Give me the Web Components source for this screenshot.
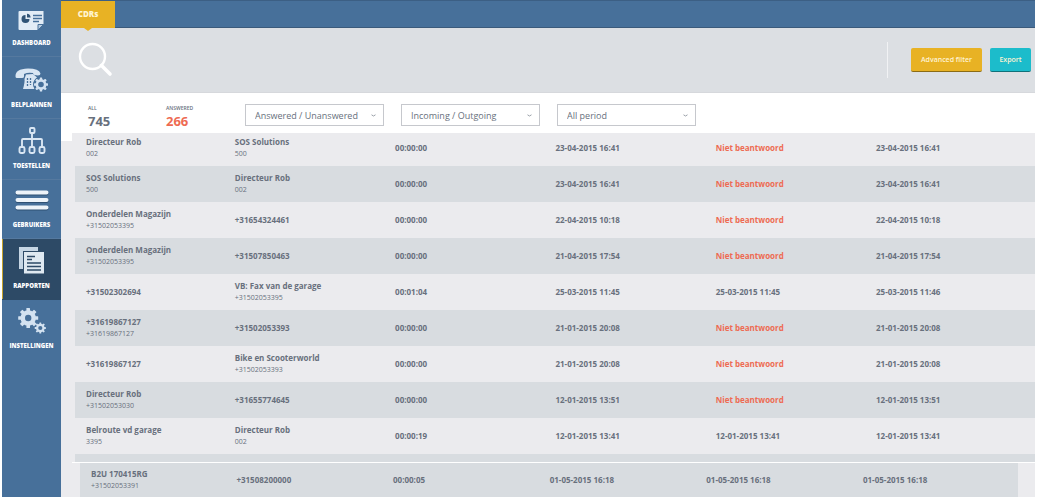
<!DOCTYPE html>
<html lang="nl">
<head>
<meta charset="utf-8">
<meta name="viewport" content="width=device-width, initial-scale=1">
<title>CDRs</title>
<style>
  body {
    margin: 0;
    background: #fff;
    color: #68707d;
    font-family: "Open Sans", "Noto Sans", sans-serif;
    --blue: #47709a;
    --navy: #2d4a66;
    --amber: #e8b224;
    --teal: #1cbccb;
    --red: #ee6b52;
    --light: #ebebee;
    --stripe: #d8dce0;
  }
</style>
</head>
<body>
<cdr-app></cdr-app>

<script>
const define = (name, html, setup) => customElements.define(name, class extends HTMLElement {
  connectedCallback() {
    if (this.shadowRoot) return;
    const root = this.attachShadow({ mode: "open" });
    const template = document.createElement("template");
    template.innerHTML = html;
    root.append(template.content.cloneNode(true));
    if (setup) setup(this, root);
  }
});

const gear = (cx, cy, r, teeth, tooth, hole) => {
  const body = r * 0.77, ring = (body + hole) / 2;
  let out = "";
  for (let i = 0; i < teeth; i++) {
    out += `<rect x="${cx - tooth / 2}" y="${cy - r}" width="${tooth}" height="${r - ring}" rx=".5" transform="rotate(${i * 360 / teeth} ${cx} ${cy})"/>`;
  }
  return `<g fill="#d3e2f1">${out}<circle cx="${cx}" cy="${cy}" r="${ring}" fill="none" stroke="#d3e2f1" stroke-width="${body - hole}"/></g>`;
};

const icons = {
  dashboard: [28, 21, `
    <path d="M1.500 1H25.500V14L19.500 20H1.500Q.500 20 .500 19V2Q.500 1 1.500 1Z" fill="#e2ecf6"/>
    <path d="M20 20V14.500H25.500Z" fill="#b5cbe0" stroke="#47709a" stroke-width="1"/>
    <path d="M7.500 5A4 4 0 1 0 11.500 9H7.500Z" fill="#315476"/>
    <path d="M9 3.800A4 4 0 0 1 12.600 7.500H9Z" fill="#315476"/>
    <path d="M15 5.500H24M15 8.500H24M15 11.500H21" stroke="#47709a" stroke-width="1.500"/>`],
  phone: [34, 28, `
    <path d="M.500 11.500Q0 4 13 3.500Q24 3.500 25.500 8.500Q25.500 10.500 23 10.500L19.500 10Q18 9.500 18 8Q13 7 9 9V11.500Q9 13 7 13H2Q.500 13 .500 11.500Z" fill="#d9e6f3"/>
    <path d="M11 9.500L18 9L22 12.500Q17.500 16 18.500 21L19.500 24H8Q10 17 9.500 14Z" fill="#d9e6f3"/>
    <path d="M12.500 13V21M15.500 13V20" stroke="#47709a" stroke-width="1.300" stroke-dasharray="2 1"/>
    <circle cx="26" cy="19.500" r="7.800" fill="#47709a"/>${gear(26, 19.5, 7, 8, 2.4, 2.8)}`],
  tree: [28, 27, `
    <g fill="none" stroke="#d9e6f3" stroke-width="1.900">
      <rect x="12" y="1" width="4.500" height="5" rx="1"/>
      <path d="M14 6V20M4 20V13Q4 12 5 12H23Q24 12 24 13V20"/>
      <rect x="1.500" y="20" width="5" height="6" rx="1.500"/>
      <rect x="11.500" y="20" width="5" height="6" rx="1.500"/>
      <rect x="21.500" y="20" width="5" height="6" rx="1.500"/>
    </g>`],
  bars: [34, 25, `
    <path d="M2.500 5.500H31.500M2.500 13H31.500M2.500 20.500H31.500" stroke="#2f5073" stroke-width="4" stroke-linecap="round"/>
    <path d="M2.500 4.500H31.500M2.500 12H31.500M2.500 19.500H31.500" stroke="#edf3f9" stroke-width="4" stroke-linecap="round"/>`],
  report: [28, 27, `
    <path d="M1 0H20V4H5V22H1Z" fill="#c6d6e4"/>
    <path d="M6 5H26V26.500H6Z" fill="#dfe9f1"/>
    <path d="M9 9.500H17M9 12.500H14M9 16H23M9 19.500H23M9 23H23" stroke="#2d4a66" stroke-width="1.400"/>`],
  gears: [28, 26, gear(10.2, 10, 10, 8, 3.6, 3.2) + gear(22.3, 20, 5.6, 8, 1.9, 2.1)]
};

define("nav-item", `
  <style>
    :host { display: block; border-bottom: 1px solid #55799f; box-sizing: border-box; }
    :host([active]) { background: var(--navy); box-shadow: inset 1px 0 #c6a32c; border-color: var(--navy); }
    :host([last]) { border: 0; }
    a { display: flex; flex-direction: column; align-items: center; gap: 8px; padding: 8px 0 9px;
        color: #fff; text-decoration: none; }
    svg { display: block; }
    span { font-size: 6px; line-height: 8px; font-weight: 800; white-space: nowrap; text-transform: uppercase; }
  </style>
  <a href="#"><svg aria-hidden="true"></svg><span><slot></slot></span></a>`,
  (host, root) => {
    const [w, h, art] = icons[host.getAttribute("icon")];
    const svg = root.querySelector("svg");
    svg.setAttribute("width", w);
    svg.setAttribute("height", h);
    svg.setAttribute("viewBox", `0 0 ${w} ${h}`);
    svg.innerHTML = art;
  });

define("side-nav", `
  <style>
    :host { display: block; background: var(--blue); }
    nav { padding-top: 2px; }
  </style>
  <nav aria-label="Menu">
    <nav-item icon="dashboard">Dashboard</nav-item>
    <nav-item icon="phone">Belplannen</nav-item>
    <nav-item icon="tree">Toestellen</nav-item>
    <nav-item icon="bars">Gebruikers</nav-item>
    <nav-item icon="report" active>Rapporten</nav-item>
    <nav-item icon="gears" last>Instellingen</nav-item>
  </nav>`);

define("tab-bar", `
  <style>
    :host { display: flex; height: 28px; background: var(--blue); box-sizing: border-box;
            border-top: 1px solid #3c5f84; border-bottom: 1px solid #3b5a7b; }
    a { position: relative; display: block; width: 54px; height: 27px; background: var(--amber); color: #fff4cf;
        font-size: 8px; line-height: 26px; font-weight: 800; text-align: center; text-decoration: none; }
    a::after { content: ""; position: absolute; left: 23px; top: 100%;
               border: 4px solid transparent; border-top: 3px solid var(--amber); border-bottom: 0; }
  </style>
  <a href="#"><slot></slot></a>`);

define("action-button", `
  <style>
    :host { display: block; }
    button { display: block; height: 24px; padding: 0 9px; border: 0; border-bottom: 1px solid #0006;
             border-radius: 2px; background: var(--tone); color: #fff3d2; font: 600 7px/22px "Open Sans", sans-serif;
             width: var(--size); white-space: nowrap; }
  </style>
  <button type="button"><slot></slot></button>`);

define("search-bar", `
  <style>
    :host { display: flex; align-items: center; height: 65px; padding: 0 4px 0 17px; box-sizing: border-box;
            background: #dcdfe3; border-bottom: 1px solid #d6d8dc; }
    .find { display: block; padding: 0; border: 0; background: none; }
    svg { display: block; }
    input { flex: 1; min-width: 0; height: 36px; margin: 0 12px; border: 0; outline: 0; background: none;
            color: inherit; font: 14px "Open Sans", sans-serif; }
    .actions { display: flex; align-items: center; gap: 8px; height: 36px; padding-left: 23px; border-left: 1px solid #f1f2f4; }
  </style>
  <button class="find" type="button" aria-label="Zoeken">
    <svg width="36" height="36" viewBox="0 0 36 36" fill="none" stroke="#fff" stroke-linecap="round">
      <circle cx="14.500" cy="14.500" r="12.500" stroke-width="2.400"/>
      <path d="M23.500 23.500L32 32" stroke-width="3.600"/>
    </svg>
  </button>
  <input type="text" aria-label="Zoekterm">
  <div class="actions">
    <action-button style="--tone: var(--amber); --size: 71px">Advanced filter</action-button>
    <action-button style="--tone: var(--teal); --size: 41px">Export</action-button>
  </div>`);

define("stat-count", `
  <style>
    :host { display: block; width: 78px; }
    :host([alert]) strong { color: var(--red); }
    span { display: block; font-size: 5px; line-height: 8px; font-weight: 600; text-transform: uppercase; }
    strong { display: block; font-size: 13px; line-height: 18px; font-weight: 700; }
  </style>
  <span></span><strong><slot></slot></strong>`,
  (host, root) => { root.querySelector("span").textContent = host.getAttribute("label"); });

define("filter-select", `
  <style>
    :host { display: grid; width: 139px; align-items: center; }
    select, svg { grid-area: 1 / 1; }
    select { appearance: none; width: 100%; height: 22px; padding: 0 9px; border: 1px solid #c6c8cd; border-radius: 0;
             background: #fff; color: #68707d; font: 500 9px "Open Sans", sans-serif; }
    svg { justify-self: end; margin-right: 8px; pointer-events: none; }
  </style>
  <select><option></option></select>
  <svg width="5" height="3" viewBox="0 0 5 3"><path d="M.5 .8L2.500 2L4.500 .8" fill="none" stroke="#9aa0a8"/></svg>`,
  (host, root) => {
    root.querySelector("option").textContent = host.getAttribute("value");
    root.querySelector("select").setAttribute("aria-label", host.getAttribute("label"));
  });

define("filter-bar", `
  <style>
    :host { display: flex; align-items: flex-start; gap: 1px; padding: 11px 0 3px 27px; background: #fff; }
    .selects { display: flex; gap: 17px; }
    .stats { display: flex; }
  </style>
  <div class="stats">
    <stat-count label="All">745</stat-count>
    <stat-count label="Answered" alert>266</stat-count>
  </div>
  <div class="selects">
    <filter-select label="Status" value="Answered / Unanswered"></filter-select>
    <filter-select label="Richting" value="Incoming / Outgoing"></filter-select>
    <filter-select label="Periode" value="All period"></filter-select>
  </div>`);

const missed = "Niet beantwoord";
const calls = [
  ["Directeur Rob|002", "SOS Solutions|500", "00:00:00", "23-04-2015 16:41", missed, "23-04-2015 16:41"],
  ["SOS Solutions|500", "Directeur Rob|002", "00:00:00", "23-04-2015 16:41", missed, "23-04-2015 16:41"],
  ["Onderdelen Magazijn|+31502053395", "+31654324461", "00:00:00", "22-04-2015 10:18", missed, "22-04-2015 10:18"],
  ["Onderdelen Magazijn|+31502053395", "+31507850463", "00:00:00", "21-04-2015 17:54", missed, "21-04-2015 17:54"],
  ["+31502302694", "VB: Fax van de garage|+31502053395", "00:01:04", "25-03-2015 11:45", "25-03-2015 11:45", "25-03-2015 11:46"],
  ["+31619867127|+31619867127", "+31502053393", "00:00:00", "21-01-2015 20:08", missed, "21-01-2015 20:08"],
  ["+31619867127", "Bike en Scooterworld|+31502053393", "00:00:00", "21-01-2015 20:08", missed, "21-01-2015 20:08"],
  ["Directeur Rob|+31502053030", "+31655774645", "00:00:00", "12-01-2015 13:51", missed, "12-01-2015 13:51"],
  ["Belroute vd garage|3395", "Directeur Rob|002", "00:00:19", "12-01-2015 13:41", "12-01-2015 13:41", "12-01-2015 13:41"]
];
const latest = [
  ["B2U 170415RG|+31502053391", "+31508200000", "00:00:05", "01-05-2015 16:18", "01-05-2015 16:18", "01-05-2015 16:18"]
];

define("call-table", `
  <style>
    :host { display: block; }
    table { width: 100%; border-collapse: collapse; table-layout: fixed; }
    col { width: 16.7%; }
    col:first-child { width: 15.5%; }
    col:last-child { width: auto; }
    td { height: 36px; padding: 0 0 0 11px; font-size: 8px; line-height: 12px; font-weight: 700; white-space: nowrap; }
    small { display: block; font-size: 7px; line-height: 12px; font-weight: 400; }
    .missed { color: var(--red); }
    tr:nth-child(even), :host([single]) tr { background: var(--stripe); }
    tr:first-child td { height: 33px; padding-bottom: 4px; box-sizing: border-box; }
    :host([single]) tr:first-child td { height: 34px; padding-bottom: 0; }
  </style>
  <table aria-label="Gesprekken"><colgroup><col><col><col><col><col><col></colgroup><tbody></tbody></table>`,
  (host, root) => {
    const body = root.querySelector("tbody");
    for (const call of host.hasAttribute("single") ? latest : calls) {
      const row = body.insertRow();
      for (const value of call) {
        const [main, sub] = value.split("|");
        const cell = row.insertCell();
        cell.append(main);
        if (main === missed) cell.className = "missed";
        if (sub) {
          const small = document.createElement("small");
          small.textContent = sub;
          cell.append(small);
        }
      }
    }
  });

define("cdr-app", `
  <style>
    :host { display: grid; grid-template-columns: 59px minmax(0, 1fr); min-height: 100vh; padding: 0 3px 0 2px; box-sizing: border-box; }
    main { background: var(--light); }
    .list { padding-left: 14px; background: linear-gradient(#fff, #fff) 0 0 / 11px 8px no-repeat; }
    .list call-table { border-bottom: 8px solid var(--stripe); }
    .line { height: 1px; margin: 0 0 0 11px; background: #fff; }
    .latest { padding: 0 17px 0 19px; }
  </style>
  <side-nav></side-nav>
  <main>
    <tab-bar>CDRs</tab-bar>
    <search-bar></search-bar>
    <filter-bar></filter-bar>
    <div class="list"><call-table></call-table></div>
    <div class="line"></div>
    <div class="latest"><call-table single></call-table></div>
  </main>`);
</script>
</body>
</html>
